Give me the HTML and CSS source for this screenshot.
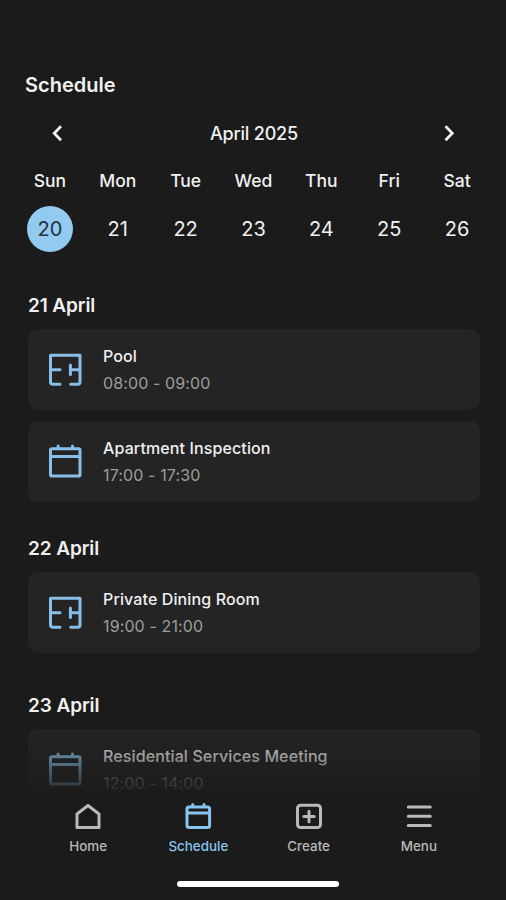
FILE: index.html
```html
<!DOCTYPE html>
<html lang="en">
<head>
    <meta charset="UTF-8">
    <meta name="viewport" content="width=device-width, initial-scale=1.0">
    <title>Schedule</title>
    <link rel="stylesheet" href="styles.css">
</head>
<body>

<!-- Shared icons -->
<svg class="icon-defs" aria-hidden="true">
    <symbol id="icon-room" viewBox="0 0 34 34">
        <path d="M12 31.3H5Q2.5 31.3 2.5 29V2.3H32V29Q32 31.3 29.7 31.3H22.7M2.5 16.7H12M22.4 16.7H32M22.4 12V21.4"/>
    </symbol>
    <symbol id="icon-calendar" viewBox="0 0 34 36">
        <path d="M4 4.7H30.7Q32 4.7 32 6V30.7Q32 32 30.7 32H3.8Q2.5 32 2.5 30.7V6Q2.5 4.7 4 4.7ZM2.5 12.4H32M10.1 2V4.7M24.5 2V4.7"/>
    </symbol>
</svg>

<main class="screen">
    <h1>Schedule</h1>

    <div class="month">
        <button type="button" aria-label="Previous week">
            <svg width="12" height="18" viewBox="0 0 12 18"><path d="M10 1.2L3.2 8.2L10 15.2"/></svg>
        </button>
        <span class="month-name">April 2025</span>
        <button type="button" aria-label="Next week">
            <svg width="12" height="18" viewBox="0 0 12 18"><path d="M2.5 1.2L9.3 8.2L2.5 15.2"/></svg>
        </button>
    </div>

    <div class="week week-names">
        <span>Sun</span><span>Mon</span><span>Tue</span><span>Wed</span><span>Thu</span><span>Fri</span><span>Sat</span>
    </div>
    <div class="week week-days">
        <span class="selected">20</span><span>21</span><span>22</span><span>23</span><span>24</span><span>25</span><span>26</span>
    </div>

    <div class="agenda">
        <section>
            <h2>21 April</h2>
            <div class="event">
                <svg class="event-icon" width="34" height="34"><use href="#icon-room"/></svg>
                <div>
                    <h3>Pool</h3>
                    <p>08:00 - 09:00</p>
                </div>
            </div>
            <div class="event">
                <svg class="event-icon" width="34" height="36"><use href="#icon-calendar"/></svg>
                <div>
                    <h3>Apartment Inspection</h3>
                    <p>17:00 - 17:30</p>
                </div>
            </div>
        </section>
        <section>
            <h2>22 April</h2>
            <div class="event">
                <svg class="event-icon" width="34" height="34"><use href="#icon-room"/></svg>
                <div>
                    <h3>Private Dining Room</h3>
                    <p>19:00 - 21:00</p>
                </div>
            </div>
        </section>
        <section>
            <h2>23 April</h2>
            <div class="event">
                <svg class="event-icon" width="34" height="36"><use href="#icon-calendar"/></svg>
                <div>
                    <h3>Residential Services Meeting</h3>
                    <p>12:00 - 14:00</p>
                </div>
            </div>
        </section>
    </div>

    <nav class="tabs">
        <a>
            <svg width="28" height="30" viewBox="0 0 28 30"><path d="M3 12L14 3.5L25 12V25.6H3Z"/></svg>
            <span>Home</span>
        </a>
        <a class="active">
            <svg width="28" height="30" viewBox="0 0 28 30"><path d="M5 5H23.6Q25.6 5 25.6 7V23.6Q25.6 25.6 23.6 25.6H5Q3 25.6 3 23.6V7Q3 5 5 5ZM3 11H25.6M8.7 2.5V5M20 2.5V5"/></svg>
            <span>Schedule</span>
        </a>
        <a>
            <svg width="28" height="30" viewBox="0 0 28 30"><rect x="2.5" y="3.3" width="23" height="22.3" rx="3"/><path d="M14 9.3V19.7M8.8 14.5H19.2"/></svg>
            <span>Create</span>
        </a>
        <a>
            <svg width="28" height="30" viewBox="0 0 28 30"><path d="M3.3 5H25.3M3.3 14.2H25.3M3.3 23.6H25.3"/></svg>
            <span>Menu</span>
        </a>
    </nav>

    <div class="home-bar"></div>
</main>

</body>
</html>
```

FILE: styles.css
```css
* {
    box-sizing: border-box;
}
body {
    margin: 0;
    background-color: #1b1b1b;
    color: #f0f0f0;
    font-family: Inter, "Liberation Sans", sans-serif;
}
h1, h2, h3, p {
    margin: 0;
}
svg {
    display: block;
    fill: none;
    stroke: currentColor;
}
.icon-defs {
    display: none;
}
.screen {
    display: flex;
    flex-direction: column;
    height: 900px;
    padding-top: 70px;
    overflow: hidden;
}
h1 {
    padding-left: 25px;
    font-size: 20px;
    font-weight: 600;
    line-height: 30px;
}
.month {
    display: flex;
    justify-content: space-between;
    align-items: center;
    height: 30px;
    margin-top: 19px;
    padding: 0 51px;
}
.month-name {
    padding-left: 2px;
    font-size: 18px;
    font-weight: 500;
    letter-spacing: -0.2px;
    line-height: 30px;
}
.month button {
    padding: 0;
    border: none;
    background: none;
    color: #f5f5f5;
    stroke-width: 2.7;
    cursor: pointer;
}
.week {
    display: grid;
    grid-template-columns: repeat(7, 1fr);
    align-items: center;
    justify-items: center;
    padding: 0 15px 0 16px;
}
.week-names {
    height: 30px;
    margin-top: 16px;
    font-size: 17.5px;
    font-weight: 500;
}
.week-days {
    height: 46px;
    margin-top: 11px;
    font-size: 20px;
}
.selected {
    width: 46px;
    height: 46px;
    border-radius: 50%;
    background-color: #92caf0;
    color: #24323d;
    line-height: 46px;
    text-align: center;
}
.agenda {
    position: relative;
    height: 516px;
    margin-top: 38px;
    padding: 0 26px 0 28px;
    overflow: hidden;
}
/* fades the list out above the tab bar */
.agenda::after {
    content: "";
    position: absolute;
    left: 0;
    right: 0;
    bottom: 0;
    height: 78px;
    background: linear-gradient(rgba(27, 27, 27, 0), #1b1b1b 92%);
}
.agenda section {
    margin-bottom: 31px;
}
.agenda section:nth-child(2) {
    margin-bottom: 37px;
}
h2 {
    height: 39px;
    font-size: 19px;
    font-weight: 600;
    letter-spacing: -0.1px;
    line-height: 31px;
}
.event {
    display: flex;
    align-items: center;
    gap: 21px;
    height: 81px;
    padding-left: 20px;
    border-radius: 10px;
    background-color: #242424;
}
.event + .event {
    margin-top: 11px;
}
.event-icon {
    color: #87bfe8;
    stroke-width: 3;
    stroke-linecap: round;
    stroke-linejoin: round;
}
h3 {
    font-size: 16px;
    font-weight: 500;
    letter-spacing: 0.12px;
    line-height: 27px;
}
.event p {
    color: #9d9d9d;
    font-size: 16px;
    letter-spacing: 0.12px;
    line-height: 27px;
}
.tabs {
    display: grid;
    grid-template-columns: repeat(4, 1fr);
    margin-top: -5px;
    padding: 0 32px 0 33px;
    color: #b9b9b9;
    z-index: 1;
}
.tabs a {
    display: flex;
    flex-direction: column;
    align-items: center;
    height: 66px;
    padding-top: 1px;
    font-size: 13.4px;
    font-weight: 500;
    line-height: 20px;
    stroke-width: 3;
    stroke-linecap: round;
    stroke-linejoin: round;
}
.tabs span {
    margin-top: 4px;
}
.tabs .active {
    color: #87c5ef;
}
.home-bar {
    width: 162px;
    height: 6px;
    margin: 14px auto 0 177px;
    border-radius: 3px;
    background-color: #fff;
}
```
